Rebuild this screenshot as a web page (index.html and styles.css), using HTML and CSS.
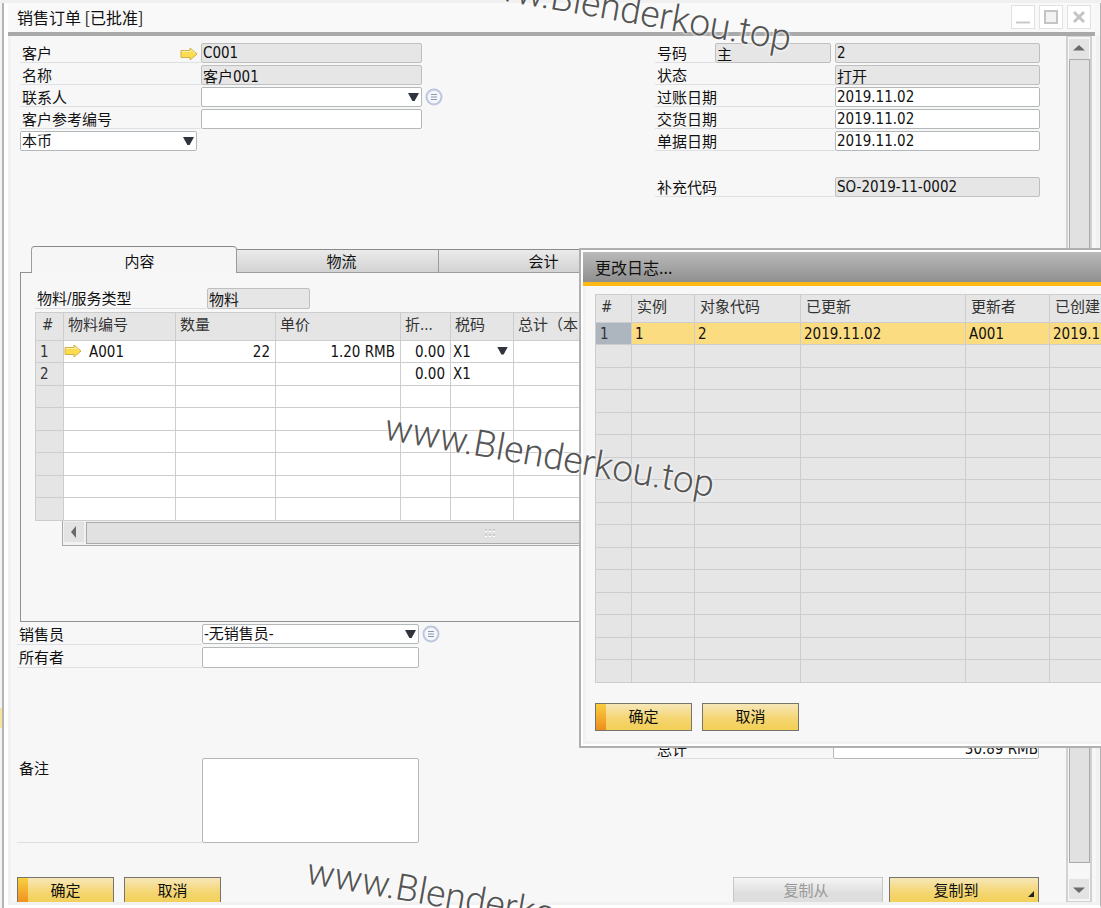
FILE: index.html
```
<!DOCTYPE html>
<html lang="zh-CN">
<head>
<meta charset="utf-8">
<title>销售订单</title>
<link rel="stylesheet" href="styles.css">
</head>
<body>
<div class="desktop">
  <div class="gutter"><span class="gutter-mark"></span></div>
  <main class="window">
    <header class="titlebar">
      <h1 class="title">销售订单 [已批准]</h1>
      <div class="win-buttons">
        <button class="win-btn" type="button" aria-label="最小化"><svg width="22" height="22" viewBox="0 0 22 22"><path d="M4 16.500h14" stroke="#c9c9c9" stroke-width="2"/></svg></button>
        <button class="win-btn" type="button" aria-label="最大化"><svg width="22" height="22" viewBox="0 0 22 22"><path d="M5 5h12v12H5z" fill="#f2f2f2" stroke="#c4c4c4" stroke-width="2"/></svg></button>
        <button class="win-btn" type="button" aria-label="关闭"><svg width="22" height="22" viewBox="0 0 22 22"><path d="M6 6l10 10M16 6L6 16" stroke="#c4c4c4" stroke-width="3"/></svg></button>
      </div>
    </header>
    <div class="window-body">
      <form class="form">
        <div class="head">
          <div class="fields left">
            <div class="row"><label for="customer">客户</label>
              <svg class="link-arrow" width="18" height="14" viewBox="0 0 18 14"><path d="M1 3.500h9V1L17 7l-7 6v-2.500H1z" fill="#fbdc4e" stroke="#d3b04a"/><path d="M2 4.500h9v-1.500l4 3.500" fill="none" stroke="#fdf0a8"/></svg>
              <input id="customer" value="C001" readonly></div>
            <div class="row"><label for="name">名称</label><input id="name" value="客户001" readonly></div>
            <div class="row"><label for="contact">联系人</label><span class="select"><select id="contact"><option></option></select></span>
              <button class="info" type="button" aria-label="联系人列表"><svg width="18" height="18" viewBox="0 0 18 18"><circle cx="9" cy="9" r="7.500" fill="#f4f6fb" stroke="#bcc7de" stroke-width="2"/><path d="M6 6.500h6M6 9h6M6 11.500h6" stroke="#8e98ad"/></svg></button></div>
            <div class="row"><label for="ref">客户参考编号</label><input id="ref"></div>
            <div class="row"><span class="select currency"><select aria-label="货币"><option>本币</option></select></span></div>
          </div>
          <div class="fields right">
            <div class="row"><label for="number">号码</label><input class="series" value="主" aria-label="系列" readonly><input id="number" value="2" readonly></div>
            <div class="row"><label for="status">状态</label><input id="status" value="打开" readonly></div>
            <div class="row"><label for="posting">过账日期</label><input id="posting" value="2019.11.02"></div>
            <div class="row"><label for="delivery">交货日期</label><input id="delivery" value="2019.11.02"></div>
            <div class="row"><label for="document">单据日期</label><input id="document" value="2019.11.02"></div>
            <div class="row extra"><label for="code">补充代码</label><input id="code" value="SO-2019-11-0002" readonly></div>
          </div>
        </div>

        <div class="tabs" role="tablist">
          <button class="tab active" type="button" role="tab" aria-selected="true">内容</button>
          <button class="tab" type="button" role="tab">物流</button>
          <button class="tab" type="button" role="tab">会计</button>
        </div>
        <section class="panel">
          <div class="row type"><label for="type">物料/服务类型</label><input id="type" value="物料" readonly></div>
          <table class="grid items">
            <colgroup><col class="c28"><col class="c112"><col class="c100"><col class="c125"><col class="c50"><col class="c63"><col></colgroup>
            <thead><tr><th class="num">#</th><th>物料编号</th><th>数量</th><th>单价</th><th>折...</th><th>税码</th><th>总计（本币）</th></tr></thead>
            <tbody>
              <tr><th>1</th><td class="link-cell"><svg class="link-arrow" width="18" height="14" viewBox="0 0 18 14"><path d="M1 3.500h9V1L17 7l-7 6v-2.500H1z" fill="#fbdc4e" stroke="#d3b04a"/><path d="M2 4.500h9v-1.500l4 3.500" fill="none" stroke="#fdf0a8"/></svg>A001</td><td class="r">22</td><td class="r">1.20 RMB</td><td class="r">0.00</td><td><span class="select cell"><select aria-label="税码"><option>X1</option></select></span></td><td></td></tr>
              <tr><th>2</th><td></td><td></td><td></td><td class="r">0.00</td><td>X1</td><td></td></tr>
              <tr><th></th><td></td><td></td><td></td><td></td><td></td><td></td></tr>
              <tr><th></th><td></td><td></td><td></td><td></td><td></td><td></td></tr>
              <tr><th></th><td></td><td></td><td></td><td></td><td></td><td></td></tr>
              <tr><th></th><td></td><td></td><td></td><td></td><td></td><td></td></tr>
              <tr><th></th><td></td><td></td><td></td><td></td><td></td><td></td></tr>
              <tr><th></th><td></td><td></td><td></td><td></td><td></td><td></td></tr>
            </tbody>
          </table>
          <div class="hscroll">
            <button class="scroll-btn" type="button" aria-label="向左滚动"><svg width="20" height="20" viewBox="0 0 20 20"><path d="M7 10l5-6v12z" fill="#6a6a6a"/></svg></button>
            <div class="hthumb"><svg width="12" height="8" viewBox="0 0 12 8"><path d="M1 2h2M5 2h2M9 2h2M1 7h2M5 7h2M9 7h2" stroke="#fff" stroke-width="2"/><path d="M1 1h2M5 1h2M9 1h2M1 6h2M5 6h2M9 6h2" stroke="#aaa"/></svg></div>
          </div>
        </section>

        <div class="bottom">
          <div class="fields sales">
            <div class="row"><label for="seller">销售员</label><span class="select"><select id="seller"><option>-无销售员-</option></select></span>
              <button class="info" type="button" aria-label="销售员列表"><svg width="18" height="18" viewBox="0 0 18 18"><circle cx="9" cy="9" r="7.500" fill="#f4f6fb" stroke="#bcc7de" stroke-width="2"/><path d="M6 6.500h6M6 9h6M6 11.500h6" stroke="#8e98ad"/></svg></button></div>
            <div class="row"><label for="owner">所有者</label><input id="owner"></div>
            <div class="row remark"><label for="remark">备注</label><textarea id="remark"></textarea></div>
          </div>
          <div class="fields totals">
            <div class="row"><label for="total">总计</label><input id="total" value="30.89 RMB"></div>
          </div>
        </div>

        <div class="actions">
          <button class="btn primary" type="button">确定</button>
          <button class="btn" type="button">取消</button>
          <button class="btn wide push" type="button" disabled>复制从</button>
          <button class="btn wide menu" type="button">复制到</button>
        </div>
      </form>
      <div class="vscroll">
        <button class="scroll-btn" type="button" aria-label="向上滚动"><svg width="20" height="20" viewBox="0 0 20 20"><path d="M10 6l6 5.500H4z" fill="#6a6a6a"/></svg></button>
        <div class="vthumb"></div>
        <button class="scroll-btn" type="button" aria-label="向下滚动"><svg width="20" height="20" viewBox="0 0 20 20"><path d="M10 14l6-5.500H4z" fill="#6a6a6a"/></svg></button>
      </div>
    </div>
  </main>

  <section class="dialog" role="dialog" aria-labelledby="log-title">
    <h2 class="dialog-title" id="log-title">更改日志...</h2>
    <div class="dialog-body">
      <table class="grid log">
        <colgroup><col class="c36"><col class="c63"><col class="c106"><col class="c165"><col class="c84"><col></colgroup>
        <thead><tr><th>#</th><th>实例</th><th>对象代码</th><th>已更新</th><th>更新者</th><th>已创建</th></tr></thead>
        <tbody>
          <tr class="selected"><th>1</th><td>1</td><td>2</td><td>2019.11.02</td><td>A001</td><td>2019.11.02</td></tr>
          <tr><th></th><td></td><td></td><td></td><td></td><td></td></tr>
          <tr><th></th><td></td><td></td><td></td><td></td><td></td></tr>
          <tr><th></th><td></td><td></td><td></td><td></td><td></td></tr>
          <tr><th></th><td></td><td></td><td></td><td></td><td></td></tr>
          <tr><th></th><td></td><td></td><td></td><td></td><td></td></tr>
          <tr><th></th><td></td><td></td><td></td><td></td><td></td></tr>
          <tr><th></th><td></td><td></td><td></td><td></td><td></td></tr>
          <tr><th></th><td></td><td></td><td></td><td></td><td></td></tr>
          <tr><th></th><td></td><td></td><td></td><td></td><td></td></tr>
          <tr><th></th><td></td><td></td><td></td><td></td><td></td></tr>
          <tr><th></th><td></td><td></td><td></td><td></td><td></td></tr>
          <tr><th></th><td></td><td></td><td></td><td></td><td></td></tr>
          <tr><th></th><td></td><td></td><td></td><td></td><td></td></tr>
          <tr><th></th><td></td><td></td><td></td><td></td><td></td></tr>
          <tr><th></th><td></td><td></td><td></td><td></td><td></td></tr>
        </tbody>
      </table>
      <div class="dialog-actions">
        <button class="btn primary" type="button">确定</button>
        <button class="btn" type="button">取消</button>
      </div>
    </div>
  </section>

  <div class="mark mark-top">www.Blenderkou.top</div>
  <div class="mark mark-mid">www.Blenderkou.top</div>
  <div class="mark mark-low">www.Blenderkou.top</div>
</div>
</body>
</html>
```
FILE: styles.css
```
* { box-sizing: border-box; }

body {
  margin: 0;
  background: #f0f0f0;
  color: #111;
  font: 15px/20px "DejaVu Sans Condensed", "Noto Sans CJK SC", sans-serif;
}

input, select, textarea, button { font: inherit; color: inherit; margin: 0; }

.desktop {
  position: relative;
  display: flex;
  height: 100vh;
  padding-top: 3px;
  overflow: hidden;
}

.gutter {
  width: 4px;
  border-right: 2px solid #b4b4b4;
  background: #f4f4f4;
}
.gutter-mark { display: block; height: 20px; margin-top: 705px; background: #f7e3a0; }

/* main window */
.window {
  flex: 1;
  min-width: 0;
  display: flex;
  flex-direction: column;
  background: #f7f7f7;
  border-left: 4px solid #fff;
  border-right: 1px solid #b4b4b4;
  border-bottom: 3px solid #fff;
}
.titlebar {
  display: flex;
  align-items: center;
  justify-content: space-between;
  height: 33px;
  flex: none;
  margin-right: 5px;
  padding: 0 4px 2px 9px;
  border-bottom: 4px solid #a9a9a9;
  background: #f9f9f9;
}
.title { margin: 0; font: 16px/24px "Noto Sans CJK SC", sans-serif; }
.win-buttons { display: flex; gap: 4px; }
.win-btn {
  width: 24px;
  height: 24px;
  padding: 0;
  border: 1px solid #e2e2e2;
  background: #fff;
}
.win-btn svg, .scroll-btn svg, .info svg { display: block; }

.window-body {
  flex: 1;
  min-height: 0;
  display: flex;
  overflow: hidden;
  border-left: 3px solid #f1f1f1;
  border-right: 4px solid #f1f1f1;
  border-bottom: 3px solid #f1f1f1;
  padding-right: 4px;
}
.form { flex: 1; min-width: 0; padding: 7px 26px 0 6px; }

/* field rows */
.head { display: flex; justify-content: space-between; padding-left: 3px; height: 203px; }
.fields { display: flex; flex-direction: column; gap: 2px; }
.row { display: flex; height: 20px; position: relative; }
.row label {
  flex: 1;
  padding: 1px 0 0 2px;
  border-bottom: 1px solid #dde1e6;
  white-space: nowrap;
}
.row .link-arrow { position: absolute; left: 160px; top: 4px; }
.row input, .row textarea, .select select {
  height: 20px;
  padding: 0 1px;
  border: 1px solid #b5b8b8;
  border-radius: 2px;
  background: #fff;
  line-height: 18px;
  outline: 0;
}
.row input[readonly] { background: #e6e6e6; border-color: #bfbfbf; }
.row textarea { height: 85px; resize: none; }

.left { width: 402px; }
.left input, .left .row > .select { width: 221px; }
.left .row > .currency { width: 177px; }
.right { width: 385px; }
.right input { width: 205px; }
.right .series { width: 116px; margin-right: 4px; }
.right .extra { margin-top: 24px; }

.select { position: relative; display: block; }
.select select { width: 100%; appearance: none; display: block; }
.select::after {
  content: "";
  position: absolute;
  right: 3px;
  top: 6px;
  width: 11px;
  height: 8px;
  background: #30343c;
  clip-path: polygon(0 0, 100% 0, 60% 100%, 40% 100%);
  pointer-events: none;
}
.info {
  position: absolute;
  left: 100%;
  top: 1px;
  margin-left: 3px;
  padding: 0;
  border: 0;
  background: none;
}

/* tabs */
.tabs { display: flex; align-items: flex-end; margin: 0 -26px -1px 14px; height: 27px; position: relative; }
.tab {
  width: 202px;
  height: 24px;
  padding: 1px 0 0 8px;
  border: 1px solid #9c9c9c;
  border-left-width: 0;
  border-top-color: #8a8a8a;
  background: linear-gradient(#ebebeb, #d2d2d2);
}
.tab.active {
  width: 206px;
  height: 27px;
  padding: 4px 0 0 11px;
  border-left-width: 1px;
  border-bottom: 0;
  border-radius: 4px 4px 0 0;
  background: #f6f6f6;
}
.panel {
  height: 350px;
  margin: 0 -14px 0 3px;
  padding: 15px 14px 0;
  border: 1px solid #909090;
}
.row.type { width: 275px; height: 21px; margin-bottom: 3px; }
.row.type input { width: 103px; height: 21px; }

/* data grids */
.grid { border-collapse: collapse; table-layout: fixed; width: 100%; background: #fff; }
.grid th, .grid td {
  height: 22px;
  padding: 0 5px 0 2px;
  border: 1px solid #cdcdcd;
  line-height: 20px;
  font-weight: normal;
  text-align: left;
  white-space: nowrap;
  overflow: hidden;
}
.grid tr:nth-child(even) > * { height: 23px; }
.grid th { padding-left: 4px; background: #e5e5e5; color: #333; }
.grid thead th { height: 28px; padding-bottom: 4px; padding-right: 0; }
.grid thead .num { padding-left: 6px; }
.grid .r { text-align: right; }
.grid .link-cell { padding-left: 0; }
.link-cell .link-arrow { vertical-align: middle; margin: -3px 7px 0 0; }
.cell select { height: 20px; padding: 0; border: 0; }
.cell::after { right: 0; top: 5px; }
.c28 { width: 28px; }
.c36 { width: 36px; }
.c50 { width: 50px; }
.c63 { width: 63px; }
.c84 { width: 84px; }
.c100 { width: 100px; }
.c106 { width: 106px; }
.c112 { width: 112px; }
.c125 { width: 125px; }
.c165 { width: 165px; }

/* scroll bars */
.scroll-btn {
  width: 20px;
  height: 20px;
  padding: 0;
  border: 0;
  background: #e3e3e3;
  flex: none;
}
.hscroll {
  display: flex;
  height: 25px;
  margin-left: 27px;
  padding: 1px;
  gap: 2px;
  border: 1px solid #a9a9a9;
  border-top: 0;
  background: #f1f1f1;
}
.hthumb {
  display: flex;
  align-items: center;
  justify-content: center;
  width: 808px;
  border: 1px solid #aaa;
  background: #e1e1e1;
}
.vscroll {
  width: 26px;
  display: flex;
  flex-direction: column;
  align-items: center;
  padding: 2px 0;
  border: solid #d2d2cc;
  border-width: 1px 2px;
  background: #f7f7f7;
}
.vthumb { flex: 1; width: 21px; margin-bottom: 16px; border: 1px solid #aaa; background: #e1e1e1; }

/* lower part of the form */
.bottom { display: flex; justify-content: space-between; padding: 2px 1px 0 0; }
.sales { width: 402px; }
.sales .row { height: 21px; }
.sales input, .sales textarea, .sales .row > .select { width: 217px; }
.sales input { height: 21px; }
.sales .row.remark { height: 85px; margin-top: 88px; }
.totals { width: 384px; padding-top: 115px; }
.totals input { width: 206px; padding: 0; text-align: right; }

.actions { display: flex; gap: 10px; margin: 34px 1px 0 0; }
.btn {
  position: relative;
  width: 97px;
  height: 28px;
  padding: 0;
  border: 1px solid #77746c;
  background: linear-gradient(#f6e7b8, #f5d672 55%, #f2cf55);
}
.btn.primary { background: linear-gradient(#f9cf3f, #ef8d1c) 0 0 / 10px 100% no-repeat, linear-gradient(#f6e7b8, #f5d672 55%, #f2cf55); }
.btn.wide { width: 150px; }
.btn.push { margin: 0 -4px 0 auto; padding-right: 4px; }
.btn:disabled { border-color: #c6c6c6; background: linear-gradient(#f5f5f5, #dedede 60%); color: #999; }
.btn.menu { padding-right: 16px; }
.btn.menu::after {
  content: "";
  position: absolute;
  right: 4px;
  bottom: 7px;
  width: 6px;
  height: 6px;
  background: #222;
  clip-path: polygon(100% 0, 100% 100%, 0 100%);
}

/* change log dialog */
.dialog {
  position: absolute;
  left: 579px;
  top: 248px;
  width: 640px;
  border: 2px solid #b0b0b0;
  background: #f7f7f7;
  box-shadow: inset 0 0 0 2px #fff, inset 0 0 0 5px #f1f1f1;
  padding: 2px;
}
.dialog-title {
  margin: 0;
  height: 34px;
  padding: 3px 12px 0;
  border-bottom: 4px solid #fdb813;
  background: linear-gradient(#bababa, #8f8f8f);
  font: 16px/24px "Noto Sans CJK SC", sans-serif;
}
.dialog-body { padding: 8px 12px 13px; }
.log { background: #e6e6e6; }
.log td { padding-left: 3px; }
.log thead th { padding-left: 5px; }
.log .selected td { background: #fbdc81; }
.log .selected th { background: #adb5bf; }
.dialog-actions { display: flex; gap: 10px; margin-top: 20px; }

/* rotated site stamp */
.mark {
  position: absolute;
  font: 300 37px/48px Roboto, "Open Sans", sans-serif;
  color: #555;
  white-space: nowrap;
  text-shadow: 0 0 3px #fff, 0 0 3px #fff;
  transform: rotate(10deg);
  transform-origin: 0 100%;
  pointer-events: none;
}
.mark-top { left: 458px; top: -43px; }
.mark-mid { left: 381px; top: 403px; }
.mark-low { left: 303px; top: 847px; }
```
